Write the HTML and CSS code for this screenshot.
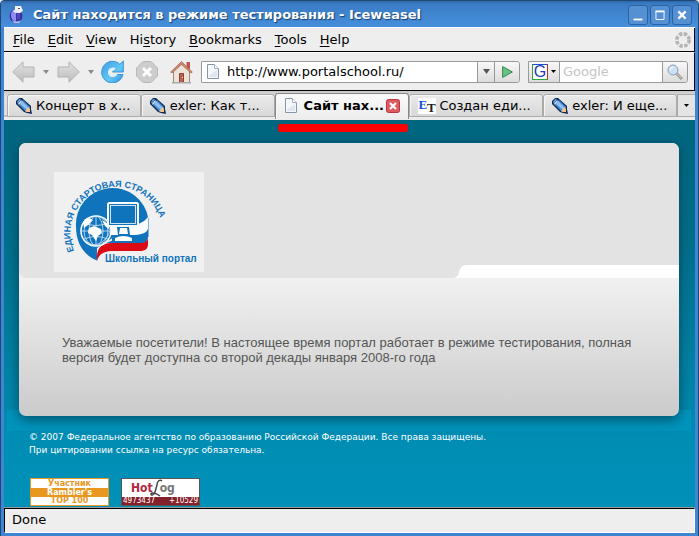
FILE: index.html
```html
<!DOCTYPE html>
<html lang="ru">
<head>
<meta charset="utf-8">
<title>Сайт находится в режиме тестирования</title>
<link rel="stylesheet" href="styles.css">
</head>
<body>
<svg class="defs" aria-hidden="true">
  <defs>
    <linearGradient id="grey" x1="0" y1="0" x2="0" y2="1"><stop offset="0" stop-color="#e2e2e2"/><stop offset="1" stop-color="#bcbcbc"/></linearGradient>
    <linearGradient id="blue" x1="0" y1="0" x2="1" y2="1"><stop offset="0" stop-color="#3f9fe0"/><stop offset=".6" stop-color="#62c8f6"/><stop offset="1" stop-color="#2f8ad4"/></linearGradient>
    <symbol id="pencil" viewBox="0 0 16 16">
      <path d="M0 3 3 0h3l9 8v3l1 5-5-1-3-1-8-8z" fill="#0c2b55"/>
      <path d="m3 7 4-5 7 7-4 5z" fill="#4a8ad0"/>
      <path d="m4 6 2-3 7 7-2 2z" fill="#8fc0f0"/>
      <path d="M1 4 3 1h2L2 6z" fill="#5f9be0"/>
      <path d="M2 6 5 2l1 1-3 4z" fill="#d4e4f4"/>
      <path d="m9 13 4-4 1 2v3l-3 0z" fill="#f3c490"/>
    </symbol>
    <symbol id="page" viewBox="0 0 12 15">
      <path d="M.5.5h7l4 4v10H.5z" fill="#f5f8fb" stroke="#8795a8"/>
      <path d="M7.500.5v4h4" fill="#fff" stroke="#a3afbf"/>
      <path d="M2 11.500 10 6v7H2z" fill="#dfe6ee"/>
    </symbol>
  </defs>
</svg>
<div class="window">
  <header class="titlebar">
    <svg class="app-icon" viewBox="0 0 16 18"><ellipse cx="7" cy="10" rx="6.500" ry="7" fill="#3a34a0"/><path d="M2 9c0-4 3-6 5-6v12c-3 0-5-2-5-6z" fill="#8d8cf0"/><path d="M4 5c3-2 7-2 9 1l-2 1H6z" fill="#e4e6fa"/><path d="M6 0h6l2 5-3 1-5-2z" fill="#f1f1f4"/><path d="M8 7h3v6H8z" fill="#4b46c4"/><path d="M3 14c3 2 6 2 9 0l-2 3H5z" fill="#b9bcf5"/><path d="M9 2h2v1H9z" fill="#555"/></svg>
    <h1 class="title">Сайт находится в режиме тестирования - Iceweasel</h1>
    <div class="window-buttons">
      <button class="wb" aria-label="Minimize"><svg viewBox="0 0 20 20"><path d="M5 14h10v2H5z" fill="#fff"/></svg></button>
      <button class="wb" aria-label="Maximize"><svg viewBox="0 0 20 20"><path d="M5.500 6v9h9V6z" fill="none" stroke="#fff"/><path d="M5 5h10v2H5z" fill="#fff"/></svg></button>
      <button class="wb" aria-label="Close"><svg viewBox="0 0 20 20"><path d="m6 6 8 8m0-8-8 8" stroke="#fff" stroke-width="2.500"/></svg></button>
    </div>
  </header>
  <div class="frame">
    <nav class="menubar">
      <button><u>F</u>ile</button><button><u>E</u>dit</button><button><u>V</u>iew</button><button>Hi<u>s</u>tory</button><button><u>B</u>ookmarks</button><button><u>T</u>ools</button><button><u>H</u>elp</button>
      <svg class="throbber" viewBox="0 0 16 16"><circle cx="8" cy="8" r="6.200" fill="none" stroke="#b4b4b4" stroke-width="3.600" stroke-dasharray="3.400 1.470"/></svg>
    </nav>
    <div class="toolbar">
      <button class="tb" aria-label="Back"><svg width="23" height="22" viewBox="0 0 23 22"><path d="M.7 11 11 .8V6h11v10H11v5.200z" fill="url(#grey)" stroke="#b3b3b3"/></svg></button>
      <button class="tb drop" aria-label="Back history"><svg width="6" height="4" viewBox="0 0 6 4"><path d="M0 0h6L3 4z" fill="#888"/></svg></button>
      <button class="tb" aria-label="Forward"><svg width="23" height="22" viewBox="0 0 23 22"><path d="M22.300 11 12 .8V6H1v10h11v5.200z" fill="url(#grey)" stroke="#b3b3b3"/></svg></button>
      <button class="tb drop" aria-label="Forward history"><svg width="6" height="4" viewBox="0 0 6 4"><path d="M0 0h6L3 4z" fill="#888"/></svg></button>
      <button class="tb reload" aria-label="Reload"><svg width="23" height="23" viewBox="0 0 23 23"><path d="M22.300 1v11H11.500l3.500-3.500A5 5 0 1 0 16.500 14.500l5.500 0A10.800 10.800 0 1 1 18.800 4.200z" fill="url(#blue)" stroke="#3a93d6"/><path d="M15 8.500A5 5 0 1 0 16.500 14h-3a2.800 2.800 0 1 1-.5-3.500z" fill="#d5effc"/></svg></button>
      <button class="tb stop" aria-label="Stop"><svg width="22" height="22" viewBox="0 0 22 22"><path d="M7 .5h8l6.500 6.500v8L15 21.500H7L.5 15V7z" fill="#cdcdcd" stroke="#b8b8b8"/><path d="m7 7 8 8m0-8-8 8" stroke="#fff" stroke-width="3"/></svg></button>
      <button class="tb home" aria-label="Home"><svg width="23" height="24" viewBox="0 0 23 24"><path d="M16.500 2h3.500v7h-3.500z" fill="#c0564a"/><path d="M3.500 11 11.500 3 19.500 11v11.500h-16z" fill="#eee3d6" stroke="#a08c7c"/><path d="M.7 12 11.500 1.500 22.300 12l-1.300 1-9.500-8.500L2 13z" fill="#c98a70" stroke="#9a6650" stroke-width=".7"/><path d="M9.500 13.500h4v9h-4z" fill="#b5655a" stroke="#8a4136"/><path d="M12 17h1v1h-1z" fill="#ff0"/><path d="M2 22h19v1.500H2z" fill="#aaa"/></svg></button>
      <form class="address">
        <svg class="page-icon" width="12" height="15"><use href="#page"/></svg>
        <input type="text" aria-label="Address" value="http://www.portalschool.ru/">
        <button type="button" class="cell" aria-label="Show history"><svg width="7" height="5" viewBox="0 0 7 5"><path d="M0 0h7L3.500 5z" fill="#555"/></svg></button>
        <button type="button" class="cell go" aria-label="Go"><svg width="11" height="12" viewBox="0 0 11 12"><path d="M.6.6 10.400 6 .6 11.400z" fill="#6fbe83" stroke="#2d8a4e"/></svg></button>
      </form>
      <form class="search">
        <button type="button" class="engine" aria-label="Search engine"><span class="g">G</span><svg width="5" height="3" viewBox="0 0 5 3"><path d="M0 0h5L2.500 3z" fill="#000"/></svg></button>
        <input type="text" aria-label="Search" placeholder="Google">
        <button type="button" class="cell find" aria-label="Find"><svg width="16" height="16" viewBox="0 0 16 16"><path d="m9 9 6 6" stroke="#999" stroke-width="3"/><path d="m9 9 5.500 5" stroke="#d8d8d8"/><circle cx="6" cy="6" r="5" fill="#c9e2f7" stroke="#8f9dab"/><path d="M3 6a3 3 0 0 1 3-3" stroke="#fff" fill="none"/></svg></button>
      </form>
    </div>
    <div class="tabs">
      <button class="tab"><svg width="16" height="16"><use href="#pencil"/></svg><span>Концерт в х...</span></button>
      <button class="tab"><svg width="16" height="16"><use href="#pencil"/></svg><span>exler: Как т...</span></button>
      <div class="tab active"><svg width="12" height="15"><use href="#page"/></svg><span>Сайт нах...</span><button class="tab-close" aria-label="Close tab"><svg width="14" height="14" viewBox="0 0 14 14"><rect x=".5" y=".5" width="13" height="13" rx="2" fill="#dd5b60" stroke="#b9343d"/><path d="m4 4 6 6m0-6-6 6" stroke="#fff" stroke-width="2.200"/></svg></button></div>
      <button class="tab"><span class="et"><b>E</b><i>T</i></span><span>Создан еди...</span></button>
      <button class="tab"><svg width="16" height="16"><use href="#pencil"/></svg><span>exler: И еще...</span></button>
      <button class="all-tabs" aria-label="All tabs"><svg width="5" height="3" viewBox="0 0 5 3"><path d="M0 0h5L2.500 3z" fill="#000"/></svg></button>
    </div>
    <main class="site">
      <div class="marker"></div>
      <section class="card">
        <div class="card-head">
          <svg class="logo" width="150" height="100" viewBox="0 0 150 100" role="img" aria-label="Единая стартовая страница. Школьный портал">
            <rect width="150" height="100" fill="#f0f0f0"/>
            <path d="M43 88.500C29 83 22 70 22 55a36.500 36.500 0 0 1 72.500-8V65H60L43 76z" fill="#1074bd"/>
            <path d="M30 48c8-7 20 4 32 6 15 2 27-2 32-9v12c-2 6-12 6-20 6H50z" fill="#fff"/>
            <path d="M51 71c9-2 14-7 28-7 8 0 15-2 15-7v8c0 4-3 7-8 7z" fill="#1074bd"/>
            <path d="M43 89c-1-12 4-18 14-18h29c5 0 8-2 8-6v7c0 5-3 7-8 7H59c-9 0-14 3-16 10z" fill="#dc0a14"/>
            <circle cx="42" cy="59" r="15" fill="#1074bd" stroke="#fff" stroke-width="1.500"/>
            <g fill="none" stroke="#d5e7f4" stroke-width=".8"><path d="M27 59h30M30 51q12 5 24 0M30 67q12-5 24 0M42 44v30M34 71c10 5 19-3 22-12"/><ellipse cx="42" cy="59" rx="7" ry="15"/><ellipse cx="42" cy="59" rx="12" ry="15"/></g>
            <path d="m35 56 5-2 7 3 1 4-4 3-2 5-4-6-4-2zM29 50l6-4 4 2-5 5-4 3zM48 48l6 4 2 6-5-4z" fill="#fff"/>
            <rect x="54" y="31" width="30" height="23" rx="1.500" fill="#1074bd" stroke="#fff" stroke-width="2"/>
            <rect x="56.500" y="33.500" width="25" height="18" fill="none" stroke="#fff" stroke-width=".8"/>
            <path d="M63 55h12l1 8 5 3v4H58v-4l6-3z" fill="#1074bd"/>
            <path d="M66 56h7l1 6h-9zM61 66q8-4 17 0v3H61z" fill="#fff"/>
            <path id="arc" d="M20 79A46 46 0 0 1 105 43L106 47" fill="none"/>
            <text class="logo-arc"><textPath href="#arc">ЕДИНАЯ СТАРТОВАЯ СТРАНИЦА</textPath></text>
            <text class="logo-name" x="51" y="90">Школьный портал</text>
          </svg>
          <svg class="notch" viewBox="0 0 14 13"><path d="M0 13c9 0 3-13 14-13v13z" fill="#fff"/></svg>
          <div class="strip"></div>
        </div>
        <p class="message">Уважаемые посетители! В настоящее время портал работает в режиме тестирования, полная версия будет доступна со второй декады января 2008-го года</p>
      </section>
      <div class="band"></div>
      <footer class="footer">
        <p>© 2007 Федеральное агентство по образованию Российской Федерации. Все права защищены.<br>При цитировании ссылка на ресурс обязательна.</p>
        <div class="counters">
          <a class="rambler" href="#"><span>Участник</span><span class="mid">Rambler's</span><span>TOP 100</span></a>
          <a class="hotlog" href="#"><span class="hl-top"><b>Hot</b><svg width="13" height="18" viewBox="0 0 13 18"><path d="M12 2c-2-2-5 0-5 4L5 13c-1 3-4 4-4 2s5-1 9 2" fill="none" stroke="#444" stroke-width="1.500"/></svg><em>og</em></span><span class="hl-bot"><span>4973437</span><span>+10529</span></span></a>
        </div>
      </footer>
    </main>
    <div class="status">Done</div>
  </div>
</div>
</body>
</html>
```

FILE: styles.css
```css
* { box-sizing: border-box; }
body {
  margin: 0;
  font: 13px/16px "DejaVu Sans", sans-serif;
  color: #000;
}
button, input { font: inherit; color: inherit; border: 0; padding: 0; margin: 0; background: none; }
h1, p { margin: 0; }
svg { display: block; flex: none; }
.defs { position: absolute; width: 0; height: 0; }

.window {
  display: flex;
  flex-direction: column;
  min-height: 100vh;
  background: #3f86d2;
  border: 1px solid #1d4878;
  border-radius: 4px 4px 0 0;
  padding: 0 3px 3px;
}
.titlebar {
  display: flex;
  align-items: center;
  height: 26px;
  margin: 0 -3px;
  padding: 2px 6px 0 8px;
  background: linear-gradient(#2f67a8, #3a7cc4 3px, #478fdc);
}
.app-icon { width: 16px; height: 18px; }
.title {
  flex: 1;
  margin-left: 8px;
  font-size: 13px;
  font-weight: bold;
  color: #fff;
  text-shadow: 1px 1px 1px #173f70;
  white-space: nowrap;
}
.window-buttons { display: flex; gap: 2px; }
.wb { width: 20px; height: 20px; border: 1px solid #2b62a3; border-radius: 3px; background: #5590d3; }
.wb svg { width: 18px; height: 18px; }

.frame { flex: 1; display: flex; flex-direction: column; border-top: 1px solid #fff; background: #eee; }
.menubar {
  display: flex;
  align-items: center;
  gap: 13px;
  height: 24px;
  padding: 0 3px 0 9px;
  border-right: 1px solid #000;
  border-bottom: 1px solid #000;
}
.menubar u { text-underline-offset: 2px; }
.throbber { width: 16px; height: 16px; margin-left: auto; }

.toolbar {
  display: flex;
  align-items: center;
  height: 39px;
  padding: 0 6px 0 8px;
  border-top: 1px solid #fff;
  border-right: 1px solid #000;
  border-bottom: 1px solid #000;
}
.drop { width: 22px; display: flex; justify-content: center; }
.reload { margin-left: -1px; }
.stop { margin-left: 12px; }
.home { margin-left: 12px; }
.address, .search { display: flex; height: 22px; background: #fff; border: 1px solid #999; }
.address { flex: 1; margin-left: 8px; align-items: center; border-radius: 0 3px 3px 0; }
.page-icon { margin-left: 5px; }
.address input { flex: 1; min-width: 0; margin-left: 8px; outline: 0; }
.cell {
  align-self: stretch;
  display: flex;
  align-items: center;
  justify-content: center;
  width: 17px;
  border-left: 1px solid #999;
  background: linear-gradient(#f8f8f8, #dcdcdc);
}
.go { width: 25px; border-radius: 0 3px 3px 0; }
.search { width: 160px; margin-left: 8px; border-radius: 0 3px 3px 0; }
.engine { display: flex; align-items: center; gap: 3px; width: 31px; padding-left: 3px; border-right: 1px solid #999; background: linear-gradient(#f8f8f8, #dcdcdc); }
.g {
  width: 16px;
  height: 16px;
  border: 1px solid;
  border-color: #1751d0 #d02525 #2fa63c #2fa63c;
  background: #fff;
  color: #1c3bb0;
  font: 16px/14px "Liberation Sans", sans-serif;
  text-align: center;
}
.search input { flex: 1; min-width: 0; padding-left: 3px; outline: 0; }
.search input::placeholder { color: #c4c4c4; opacity: 1; }
.find { width: 25px; border-radius: 0 3px 3px 0; }

.tabs {
  display: flex;
  height: 29px;
  padding: 3px 0 0 3px;
  background: linear-gradient(#c8c8c8, #e0e0e0 6px, #dcdcdc 24px, #999 25px, #ececec 26px);
}
.tab {
  flex: 1;
  display: flex;
  align-items: center;
  min-width: 0;
  height: 23px;
  padding: 0 8px;
  border: 1px solid #aaa;
  border-radius: 3px 3px 0 0;
  background: linear-gradient(#eaeaea, #d8d8d8);
  box-shadow: inset 1px 1px #f6f6f6;
  white-space: nowrap;
}
.tab > svg { margin-right: 4px; }
.tab.active { height: 26px; margin-top: -1px; padding: 0 8px 2px 9px; background: linear-gradient(#fafafa, #ececec); border-color: #888; border-bottom: 0; font-weight: bold; }
.tab.active > svg { margin-right: 7px; }
.tab-close { margin-left: 2px; }
.et { display: flex; width: 18px; height: 16px; margin-right: 3px; background: #fff; font: bold 13px/13px "Liberation Serif", serif; color: #1c51d8; }
.et i { font-style: normal; line-height: 19px; color: #222; }
.all-tabs { display: flex; align-items: center; justify-content: center; width: 18px; height: 23px; border: 1px solid #aaa; border-right: 0; background: #e4e4e4; }

.site {
  flex: 1;
  display: flex;
  flex-direction: column;
  background: linear-gradient(#00657f, #006f8b 30%, #008db4 82%, #0091b8);
}
.marker { width: 130px; height: 8px; margin: 4px auto 0; position: relative; left: -7px; border-radius: 3px; background: #f00; }
.card {
  position: relative;
  z-index: 1;
  margin: 11px 16px 0 15px;
  border-radius: 7px;
  overflow: hidden;
  background: linear-gradient(#f1f1f1 135px, #cbcbcb);
  box-shadow: 0 3px 13px #003a4ecc;
}
.card-head { display: flex; align-items: flex-end; height: 135px; padding-left: 35px; background: #e3e3e3; border-radius: 0 0 0 7px; }
.logo { margin-bottom: 6px; }
.logo-arc { font: bold 9px "Liberation Sans", sans-serif; fill: #1074bd; }
.logo-name { font: bold 10px "Liberation Sans", sans-serif; fill: #1074bd; }
.notch { width: 14px; height: 13px; margin-left: auto; }
.strip { width: 34%; height: 13px; background: #fff; }
.message {
  padding: 57px 40px 51px 43px;
  font: 13px/15px "Liberation Sans", sans-serif;
  color: #555;
}
.band { height: 21px; margin: -6px 4px 0 3px; background: #0094bc; }
.footer { padding: 0 25px 2px; font-size: 9px; line-height: 13px; color: #fff; }
.counters { display: flex; gap: 12px; margin-top: 21px; padding-left: 1px; }
.counters a { width: 79px; height: 28px; text-decoration: none; background: #fff; }
.rambler { border: 1px solid #e8981e; color: #e8981e; font: bold 8px/9px "DejaVu Sans", sans-serif; text-align: center; }
.rambler span { display: block; }
.rambler span:last-child { line-height: 8px; }
.rambler .mid { background: #e8981e; color: #fff; }
.hotlog { display: flex; flex-direction: column; border: 1px solid #555; font: 8px/8px "DejaVu Sans Condensed", "DejaVu Sans", sans-serif; }
.hl-top { display: flex; height: 18px; padding-left: 9px; font: bold 12px/18px "DejaVu Sans Condensed", "DejaVu Sans", sans-serif; color: #b5273c; }
.hl-top svg { margin: 0 -3px; }
.hl-top em { font-style: normal; color: #777; }
.hl-bot { display: flex; justify-content: space-between; padding: 0 1px; background: #84202a; color: #fff; }

.status { height: 25px; padding: 3px 7px; border: 1px solid #fff; border-top-color: #000; border-left-color: #000; background: #eee; box-shadow: 0 -1px #999; }
```
